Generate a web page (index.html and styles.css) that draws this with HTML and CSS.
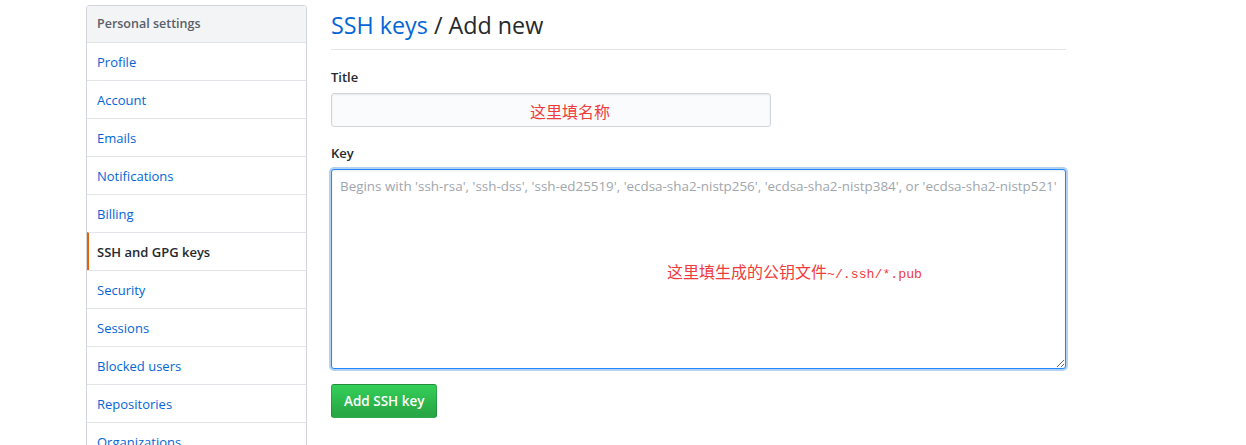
FILE: index.html
```html
<!DOCTYPE html>
<html>
<head>
<meta charset="utf-8">
<link rel="stylesheet" href="styles.css">
</head>
<body>
<div class="layout">
  <nav class="menu">
    <div class="menu-heading">Personal settings</div>
    <a class="menu-item" href="#">Profile</a>
    <a class="menu-item" href="#">Account</a>
    <a class="menu-item" href="#">Emails</a>
    <a class="menu-item" href="#">Notifications</a>
    <a class="menu-item" href="#">Billing</a>
    <a class="menu-item selected" href="#">SSH and GPG keys</a>
    <a class="menu-item" href="#">Security</a>
    <a class="menu-item" href="#">Sessions</a>
    <a class="menu-item" href="#">Blocked users</a>
    <a class="menu-item" href="#">Repositories</a>
    <a class="menu-item" href="#">Organizations</a>
  </nav>
  <main class="main">
    <h2 class="subhead"><a href="#">SSH keys</a> / Add new</h2>
    <div class="form-group">
      <label class="label">Title</label>
      <div class="field title-field">
        <input class="input" type="text">
        <span class="note note-title">这里填名称</span>
      </div>
    </div>
    <div class="form-group group-key">
      <label class="label">Key</label>
      <div class="field key-field">
        <textarea class="textarea" placeholder="Begins with 'ssh-rsa', 'ssh-dss', 'ssh-ed25519', 'ecdsa-sha2-nistp256', 'ecdsa-sha2-nistp384', or 'ecdsa-sha2-nistp521'"></textarea>
        <span class="note note-key">这里填生成的公钥文件<span class="mono">~/.ssh/*.pub</span></span>
      </div>
    </div>
    <button class="btn" type="button">Add SSH key</button>
  </main>
</div>
</body>
</html>
```
FILE: styles.css
```css
html, body {
  margin: 0;
  padding: 0;
  background: #fff;
  font-family: "Open Sans", "Noto Sans", "Noto Sans CJK SC", sans-serif;
  color: #24292e;
  overflow: hidden;
}

.layout {
  display: flex;
  align-items: flex-start;
  padding: 5px 0 0 86px;
  gap: 24px;
}

.menu {
  box-sizing: border-box;
  width: 221px;
  flex: none;
  border: 1px solid #d1d5da;
  border-radius: 3px;
  display: flex;
  flex-direction: column;
  background: #fff;
}

.menu-heading {
  padding: 8px 10px;
  line-height: 20px;
  font-size: 12.5px;
  font-weight: 600;
  color: #586069;
  background: #f3f4f6;
}

.menu-item {
  display: block;
  padding: 9px 10px 7px;
  line-height: 21px;
  font-size: 13px;
  color: #0366d6;
  text-decoration: none;
  border-top: 1px solid #e1e4e8;
}

.menu-item.selected {
  color: #24292e;
  font-weight: 600;
  border-left: 2px solid #e36209;
  padding-left: 8px;
}

.main {
  width: 735px;
  flex: none;
}

.subhead {
  margin: 5px 0 0;
  padding-bottom: 9px;
  font-size: 23.3px;
  line-height: 30px;
  font-weight: 400;
  border-bottom: 1px solid #e1e4e8;
}

.subhead a {
  color: #0366d6;
  text-decoration: none;
}

.form-group {
  margin-top: 17px;
}

.group-key {
  margin-top: 16px;
}

.label {
  display: block;
  font-size: 13px;
  font-weight: 600;
  line-height: 20px;
  margin-bottom: 6px;
}

.field {
  position: relative;
}

.input {
  display: block;
  box-sizing: border-box;
  width: 440px;
  height: 34px;
  border: 1px solid #d1d5da;
  border-radius: 3px;
  background: #fafbfc;
  box-shadow: inset 0 1px 2px rgba(27,31,35,0.075);
  font: inherit;
}

.textarea {
  display: block;
  box-sizing: border-box;
  width: 735px;
  height: 200px;
  padding: 7px 8px;
  border: 1px solid #2188ff;
  border-radius: 3px;
  background: #fff;
  box-shadow: inset 0 1px 2px rgba(27,31,35,0.075), 0 0 0 2px rgba(3,102,214,0.3);
  font-family: "Open Sans", "Noto Sans", sans-serif;
  font-size: 13.4px;
  line-height: 18px;
  outline: none;
  resize: vertical;
}

.textarea::placeholder {
  color: #a0a6ad;
}

.note {
  position: absolute;
  color: #f03c3c;
  font-family: "Noto Sans CJK SC", sans-serif;
  font-size: 16px;
  line-height: 20px;
  white-space: nowrap;
}

.note-title {
  left: 199px;
  top: 8px;
}

.note-key {
  left: 336px;
  top: 92px;
}

.mono {
  font-family: "Liberation Mono", monospace;
  font-size: 13.2px;
}

.btn {
  margin-top: 15px;
  height: 34px;
  padding: 0 12px;
  border: 1px solid rgba(27,31,35,0.2);
  border-radius: 3px;
  background: linear-gradient(-180deg, #34d058 0%, #28a745 90%);
  color: #fff;
  font-family: "Open Sans", "Noto Sans", sans-serif;
  font-size: 13.5px;
  font-weight: 600;
  line-height: 20px;
}
```
